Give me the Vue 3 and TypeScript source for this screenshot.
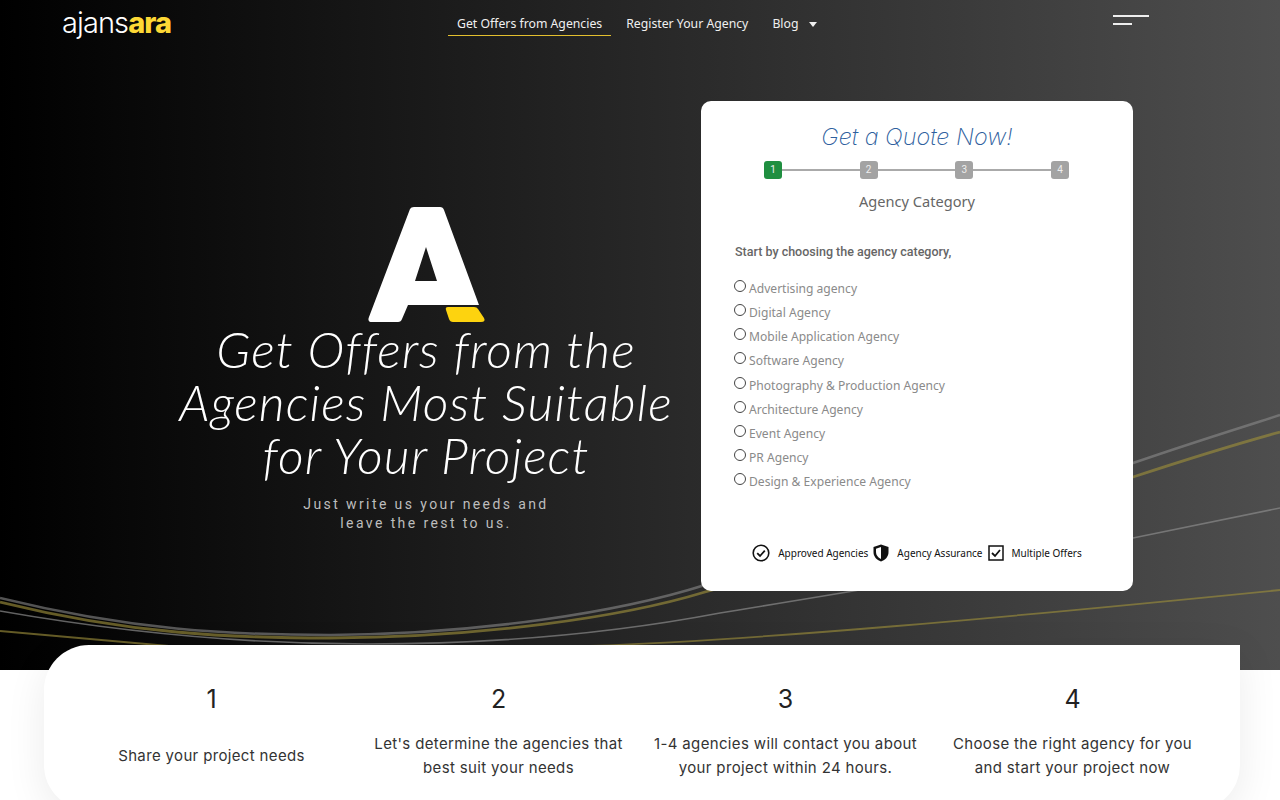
<script setup lang="ts">
const links = [
  { label: "Get Offers from Agencies", active: true },
  { label: "Register Your Agency", active: false },
  { label: "Blog", active: false, caret: true },
];

const wizardSteps = [1, 2, 3, 4];

const categories = [
  "Advertising agency",
  "Digital Agency",
  "Mobile Application Agency",
  "Software Agency",
  "Photography & Production Agency",
  "Architecture Agency",
  "Event Agency",
  "PR Agency",
  "Design & Experience Agency",
];

const howItWorks = [
  { no: 1, text: "Share your project needs" },
  { no: 2, text: "Let's determine the agencies that best suit your needs" },
  { no: 3, text: "1-4 agencies will contact you about your project within 24 hours." },
  { no: 4, text: "Choose the right agency for you and start your project now" },
];
</script>

<template>
  <div class="page">
    <section class="hero">
      <!-- background curves -->
      <svg class="curves" viewBox="0 0 1280 670" fill="none">
        <path d="M0 598C130 630 230 635 330 635C480 634 620 612 705 585C850 540 1000 510 1133 463C1200 440 1240 428 1280 415" stroke="#8a8a8a" stroke-opacity=".6" stroke-width="2.5" />
        <path d="M0 602C130 634 230 638 330 638C480 637 620 618 705 592C850 550 1000 520 1133 477C1200 455 1240 443 1280 432" stroke="#9a8c3a" stroke-opacity=".65" stroke-width="2.8" />
        <path d="M0 611C120 632 250 644 367 644C500 644 620 632 720 613C860 590 1000 568 1133 538C1190 526 1240 516 1280 508" stroke="#8a8a8a" stroke-opacity=".7" stroke-width="1.6" />
        <path d="M0 631C60 636 120 642 180 647M590 646C760 640 1000 618 1280 590" stroke="#9a8c3a" stroke-opacity=".65" stroke-width="1.8" />
      </svg>

      <header class="nav">
        <div class="logo">ajans<b>ara</b></div>
        <nav class="links">
          <a v-for="l in links" :key="l.label" class="link" :class="{ active: l.active }">
            {{ l.label }}<i v-if="l.caret" class="caret"></i>
          </a>
        </nav>
        <div class="burger"><span></span><span></span></div>
      </header>

      <div class="hero-body">
        <div class="intro">
          <svg class="mark" viewBox="0 0 150 140" width="150" height="140">
            <path fill="#fff" fill-rule="evenodd" d="M59 14Q60 12 63 12H89Q92 12 93 15L128 110H57L51 124Q50 127 47 127H21Q16 127 18 122ZM75 52L64 86H86Z" />
            <path fill="#fdd30f" d="M97 112H123Q126 112 127 114L133 123Q135 127 130 127H102Q99 127 98 124L95 115Q94 112 97 112Z" />
          </svg>
          <h1>Get Offers from the Agencies Most Suitable for Your Project</h1>
          <p>Just write us your needs and<br />leave the rest to us.</p>
        </div>

        <div class="quote">
          <h2>Get a Quote Now!</h2>
          <div class="wizard">
            <template v-for="s in wizardSteps" :key="s">
              <span class="bullet" :class="{ current: s === 1 }">{{ s }}</span>
              <span v-if="s < 4" class="wire"></span>
            </template>
          </div>
          <div class="step-name">Agency Category</div>
          <div class="lead">Start by choosing the agency category,</div>
          <ul class="options">
            <li v-for="c in categories" :key="c"><i class="radio"></i>{{ c }}</li>
          </ul>
          <div class="trust">
            <div class="trust-item">
              <svg viewBox="0 0 18 18" width="18" height="18" fill="none" stroke="#111" stroke-width="1.6">
                <circle cx="9" cy="9" r="7.8" />
                <path d="M5.2 9.2L8 12L12.8 6.6" stroke-width="1.8" />
              </svg>
              <span>Approved Agencies</span>
            </div>
            <div class="trust-item">
              <svg viewBox="0 0 16 18" width="16" height="18">
                <path fill="#111" d="M8 0.5L15.5 3V8C15.5 12.5 12.5 16 8 17.5C3.5 16 0.5 12.5 0.5 8V3Z" />
                <path fill="#fff" d="M8 3L3 4.7V8C3 11 4.8 13.6 8 15Z" />
              </svg>
              <span>Agency Assurance</span>
            </div>
            <div class="trust-item">
              <svg viewBox="0 0 16 16" width="16" height="16" fill="none" stroke="#111">
                <rect x="1" y="1" width="14" height="14" stroke-width="1.5" />
                <path d="M4 8L7 11L12 5" stroke-width="1.8" />
              </svg>
              <span>Multiple Offers</span>
            </div>
          </div>
        </div>
      </div>
    </section>

    <section class="how">
      <div v-for="h in howItWorks" :key="h.no" class="how-col">
        <div class="how-no">{{ h.no }}</div>
        <div class="how-text"><span>{{ h.text }}</span></div>
      </div>
    </section>
  </div>
</template>

<style scoped>
.page {
  height: 800px;
  overflow: hidden;
  background: #fff;
}

.hero {
  position: relative;
  height: 670px;
  background: linear-gradient(90deg, #000 0%, #4e4e4e 100%);
}

.curves {
  position: absolute;
  left: 0;
  top: 0;
  width: 1280px;
  height: 670px;
}

.nav {
  position: relative;
  display: flex;
  height: 46px;
  padding-left: 62px;
}

.logo {
  width: 386px;
  padding-top: 5px;
  font-family: Inter, sans-serif;
  font-size: 29px;
  font-weight: 300;
  line-height: 36px;
  letter-spacing: -0.9px;
  color: #fff;
}

.logo b {
  font-weight: 800;
  color: #fdd835;
}

.links {
  display: flex;
  width: 665px;
  height: 36px;
}

.link {
  display: flex;
  align-items: center;
  padding: 11px 9px 0;
  margin-right: 6px;
  border-bottom: 1px solid transparent;
  font-family: "Noto Sans", sans-serif;
  font-size: 12.25px;
  color: #f0f0f0;
  box-sizing: border-box;
}

.link.active {
  border-bottom-color: #e3bf2e;
}

.caret {
  width: 0;
  height: 0;
  margin-left: 11px;
  margin-top: 2px;
  border: 4.5px solid transparent;
  border-top: 5px solid #f0f0f0;
  border-bottom: 0;
}

.burger {
  display: flex;
  flex-direction: column;
  gap: 6px;
  padding-top: 15px;
}

.burger span {
  display: block;
  width: 36px;
  height: 2px;
  background: #eee;
}

.burger span + span {
  width: 19px;
}

.hero-body {
  position: relative;
  display: flex;
  gap: 25px;
  padding: 55px 0 0 176px;
}

.intro {
  width: 500px;
  padding-top: 94px;
  text-align: center;
}

.mark {
  display: block;
  margin: 0 auto;
}

h1 {
  margin: -12px 0 0;
  font-family: Lato, sans-serif;
  font-size: 50px;
  font-style: italic;
  font-weight: 300;
  line-height: 53px;
  letter-spacing: 1.1px;
  color: #fff;
}

.intro p {
  margin: 13px 0 0;
  font-family: Roboto, sans-serif;
  font-size: 14px;
  line-height: 19px;
  letter-spacing: 2.4px;
  color: #bdbdbd;
}

.quote {
  width: 432px;
  height: 490px;
  box-sizing: border-box;
  padding-top: 21px;
  border-radius: 10px;
  background: #fff;
}

h2 {
  margin: 0;
  font-family: Inter, sans-serif;
  font-size: 23.4px;
  font-style: italic;
  font-weight: 200;
  line-height: 30px;
  text-align: center;
  color: #2f5f9e;
}

.wizard {
  display: flex;
  align-items: center;
  width: 305px;
  margin: 9px 0 0 63px;
}

.bullet {
  width: 18px;
  height: 18px;
  border-radius: 3px;
  background: #a3a3a3;
  font-family: Roboto, sans-serif;
  font-size: 10px;
  line-height: 18px;
  text-align: center;
  color: #eee;
}

.bullet.current {
  background: #1f8f40;
}

.wire {
  flex: 1;
  height: 2px;
  background: #aaa;
}

.step-name {
  margin-top: 12px;
  font-family: "Noto Sans", sans-serif;
  font-size: 14.6px;
  line-height: 20px;
  text-align: center;
  color: #666;
}

.lead {
  margin: 33px 0 0 34px;
  font-family: Roboto, sans-serif;
  font-size: 12.5px;
  font-weight: 500;
  line-height: 16px;
  color: #666;
}

.options {
  margin: 17px 0 0 33px;
  padding: 0;
  list-style: none;
}

.options li {
  display: flex;
  height: 24.15px;
  font-family: "Noto Sans", sans-serif;
  font-size: 12.1px;
  line-height: 24px;
  color: #8a8a8a;
}

.radio {
  flex: none;
  width: 10px;
  height: 10px;
  margin: 3px 3px 0 0;
  border: 1px solid #444;
  border-radius: 50%;
}

.trust {
  display: flex;
  justify-content: center;
  gap: 5px;
  margin-top: 50px;
}

.trust-item {
  display: flex;
  align-items: center;
  gap: 8px;
  font-family: "Noto Sans", sans-serif;
  font-size: 10px;
  color: #111;
}

.how {
  position: relative;
  display: grid;
  grid-template-columns: repeat(4, 1fr);
  width: 1196px;
  height: 165px;
  box-sizing: border-box;
  margin: -25px 0 0 44px;
  padding: 40px 24px 0;
  border-radius: 45px 0 45px 45px;
  background: #fff;
  box-shadow: 0 10px 40px rgba(0, 0, 0, 0.08);
}

.how-col {
  text-align: center;
  font-family: Inter, sans-serif;
  color: #222;
}

.how-no {
  font-size: 25px;
  line-height: 28px;
}

.how-text {
  display: flex;
  align-items: center;
  justify-content: center;
  height: 48px;
  margin-top: 19px;
  padding: 0 11px;
  font-size: 15px;
  line-height: 24px;
  letter-spacing: 0.35px;
  color: #333;
}
</style>

<style>
html,
body {
  margin: 0;
  background: #fff;
}
</style>
